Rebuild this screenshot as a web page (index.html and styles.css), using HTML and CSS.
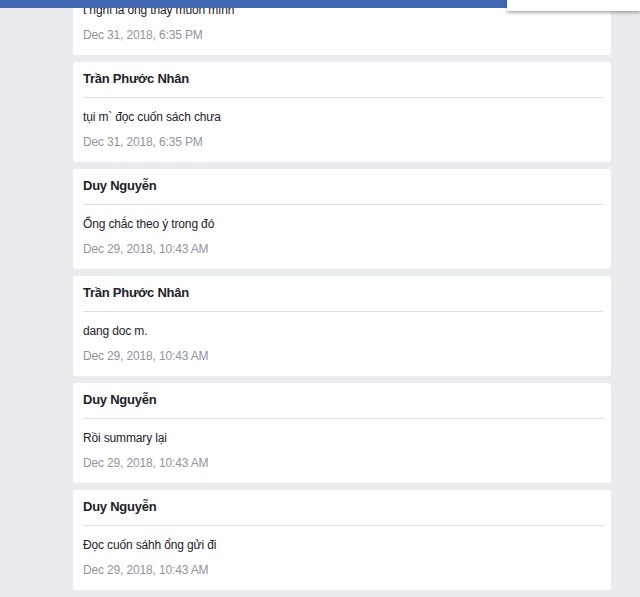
FILE: index.html
```html
<!DOCTYPE html>
<html lang="vi">
<head>
<meta charset="utf-8">
<title>Messages</title>
<link rel="stylesheet" href="styles.css">
</head>
<body>
<header class="topbar">
  <div class="menu-box"></div>
</header>
<main class="feed">
  <article class="card">
    <div class="card-head"><span class="name">Duy Nguyễn</span></div>
    <p class="msg">t nghĩ là ông thầy muốn mình</p>
    <p class="time">Dec 31, 2018, 6:35 PM</p>
  </article>
  <article class="card">
    <div class="card-head"><span class="name">Trần Phước Nhân</span></div>
    <p class="msg">tụi m` đọc cuốn sách chưa</p>
    <p class="time">Dec 31, 2018, 6:35 PM</p>
  </article>
  <article class="card">
    <div class="card-head"><span class="name">Duy Nguyễn</span></div>
    <p class="msg">Ổng chắc theo ý trong đó</p>
    <p class="time">Dec 29, 2018, 10:43 AM</p>
  </article>
  <article class="card">
    <div class="card-head"><span class="name">Trần Phước Nhân</span></div>
    <p class="msg">dang doc m.</p>
    <p class="time">Dec 29, 2018, 10:43 AM</p>
  </article>
  <article class="card">
    <div class="card-head"><span class="name">Duy Nguyễn</span></div>
    <p class="msg">Rồi summary lại</p>
    <p class="time">Dec 29, 2018, 10:43 AM</p>
  </article>
  <article class="card">
    <div class="card-head"><span class="name">Duy Nguyễn</span></div>
    <p class="msg">Đọc cuốn sáhh ổng gửi đi</p>
    <p class="time">Dec 29, 2018, 10:43 AM</p>
  </article>
</main>
</body>
</html>
```

FILE: styles.css
```css
* { box-sizing: border-box; }
html, body {
  margin: 0;
  padding: 0;
  background: #e9ebee;
  font-family: "Liberation Sans", Arial, Helvetica, sans-serif;
  color: #1d2129;
  overflow: hidden;
}
.topbar {
  position: fixed;
  top: 0;
  left: 0;
  right: 0;
  height: 8px;
  background: #4267b2;
  z-index: 10;
}
.menu-box {
  position: absolute;
  top: 0;
  left: 507px;
  right: 0;
  height: 11px;
  background: #fff;
  box-shadow: 0 2px 3px rgba(0, 0, 0, 0.3);
}
.feed {
  width: 538px;
  margin: -45px 0 0 73px;
  display: flex;
  flex-direction: column;
  gap: 7px;
}
.card {
  background: #fff;
  border-radius: 3px;
  padding: 0 8px 13px 10px;
  height: 100px;
}
.card-head {
  padding: 7px 0 9px;
  line-height: 18px;
  border-bottom: 1px solid #dddfe2;
}
.name {
  font-weight: bold;
  font-size: 13px;
  letter-spacing: -0.25px;
}
.msg {
  margin: 11px 0 0;
  font-size: 12px;
  line-height: 16px;
  letter-spacing: -0.15px;
}
.time {
  margin: 9px 0 0;
  font-size: 12px;
  line-height: 16px;
  color: #90949c;
  letter-spacing: -0.15px;
}
```
